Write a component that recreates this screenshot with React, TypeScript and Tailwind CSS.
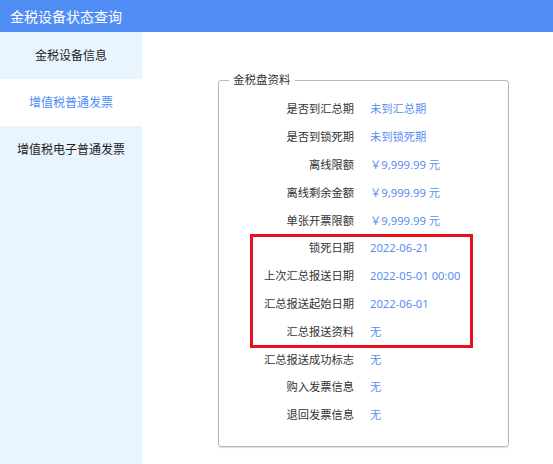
import React from "react";

const font = { fontFamily: '"Noto Sans", "Noto Sans CJK SC", sans-serif' };

const rowsTop = [
  ["是否到汇总期", "未到汇总期"],
  ["是否到锁死期", "未到锁死期"],
  ["离线限额", "￥9,999.99 元"],
  ["离线剩余金额", "￥9,999.99 元"],
  ["单张开票限额", "￥9,999.99 元"],
];

const rowsMarked = [
  ["锁死日期", "2022-06-21"],
  ["上次汇总报送日期", "2022-05-01 00:00"],
  ["汇总报送起始日期", "2022-06-01"],
  ["汇总报送资料", "无"],
];

const rowsBottom = [
  ["汇总报送成功标志", "无"],
  ["购入发票信息", "无"],
  ["退回发票信息", "无"],
];

function Row({ label, value }: { label: string; value: string }) {
  return (
    <div className="flex h-[27.8px] items-center text-[11.25px]">
      <div className="w-[135px] text-right text-[#333]">{label}</div>
      <div className="ml-4 text-[#5a8ef2]">{value}</div>
    </div>
  );
}

export default function App() {
  return (
    <div className="flex h-[464px] w-[553px] flex-col overflow-hidden bg-white" style={font}>
      <div className="flex h-8 items-center bg-[#4f8df5] pl-[10px] text-[14px] text-white">
        金税设备状态查询
      </div>
      <div className="flex flex-1">
        <div className="flex w-[142px] flex-col bg-[#e8f4fe] text-[12px]">
          <div className="flex h-[47px] items-center justify-center text-[#222]">金税设备信息</div>
          <div className="flex h-[47px] items-center justify-center bg-white text-[#4f8df5]">
            增值税普通发票
          </div>
          <div className="flex h-[47px] items-center justify-center text-[#222]">增值税电子普通发票</div>
        </div>
        <div className="flex-1">
          <fieldset className="ml-[76px] mt-[40px] h-[375px] w-[291px] rounded-[3px] border border-[#b8b8b8] shadow-[0_1px_1px_rgba(0,0,0,0.12)]">
            <legend className="ml-[10px] px-[4px] text-[11.5px] leading-4 text-[#333]">金税盘资料</legend>
            <div className="pt-[8px]">
              {rowsTop.map(([l, v]) => (
                <Row key={l} label={l} value={v} />
              ))}
              <div className="relative">
                {rowsMarked.map(([l, v]) => (
                  <Row key={l} label={l} value={v} />
                ))}
                <div className="absolute bottom-[-2px] left-[31px] top-[-1px] w-[223px] border-[3px] border-[#e8101e]" />
              </div>
              {rowsBottom.map(([l, v]) => (
                <Row key={l} label={l} value={v} />
              ))}
            </div>
          </fieldset>
        </div>
      </div>
    </div>
  );
}
